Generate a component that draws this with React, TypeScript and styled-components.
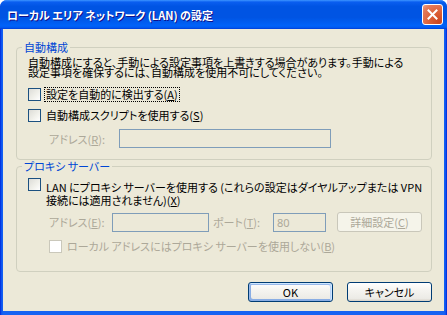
import React from 'react'
import styled, { createGlobalStyle } from 'styled-components'

const GlobalStyle = createGlobalStyle`
  html, body {
    margin: 0;
    padding: 0;
    background: #ffffff;
  }
  body {
    font-family: "Noto Sans CJK JP", "Noto Sans", sans-serif;
    font-size: 11px;
    color: #000;
  }
`

const S = {
  Window: styled.div`
    width: 447px;
    height: 315px;
    box-sizing: border-box;
    display: flex;
    flex-direction: column;
    border-radius: 7px 7px 0 0;
    overflow: hidden;
    background: linear-gradient(90deg, #0019cf 0, #0a4ff0 1px, #1663f2 3px, #1663f2 calc(100% - 3px), #0a4ff0 calc(100% - 1px), #0019cf 100%);
  `,
  TitleBar: styled.div`
    height: 29px;
    flex: none;
    display: flex;
    align-items: center;
    justify-content: space-between;
    padding: 0 4px 0 7px;
    background: linear-gradient(180deg, #3d95ff 0%, #0a5ef0 7%, #0054e3 22%, #0054e3 60%, #0062f8 88%, #005cf3 94%, #003dd7 100%);
  `,
  Title: styled.span`
    color: #fff;
    font-weight: 700;
    font-size: 11px;
    white-space: nowrap;
    text-shadow: 1px 1px #0f1089;
    font-feature-settings: "palt";
  `,
  Close: styled.div`
    width: 21px;
    height: 21px;
    box-sizing: border-box;
    border: 1px solid #fff;
    border-radius: 3px;
    background: radial-gradient(circle at 85% 90%, #cc4620 0, #db5e35 40%, #e47b5b 80%, #f0a287 100%);
    display: flex;
    align-items: center;
    justify-content: center;
  `,
  Body: styled.div`
    flex: 1;
    min-height: 0;
    margin: 0 3px 4px;
    background: #ece9d8;
    padding: 12px 12px 9px 13px;
    display: flex;
    flex-direction: column;
  `,
  Group: styled.fieldset<{ $gap?: number }>`
    margin: 0 0 ${p => p.$gap ?? 0}px;
    padding: 0;
    border: 1px solid #d0d0bf;
    border-radius: 4px;
    min-inline-size: 0;
  `,
  Legend: styled.legend`
    margin-left: 5px;
    padding: 0 2px;
    color: #0046d5;
    line-height: 13px;
    white-space: nowrap;
    font-feature-settings: "palt";
  `,
  GroupBody: styled.div<{ $pt: number; $pb: number }>`
    padding: ${p => p.$pt}px 11px ${p => p.$pb}px;
    display: flex;
    flex-direction: column;
  `,
  Desc: styled.p`
    margin: 0 0 11px;
    line-height: 10px;
    white-space: nowrap;
    font-feature-settings: "palt";
  `,
  CheckRow: styled.div<{ $indent?: number; $mb?: number }>`
    display: flex;
    align-items: flex-start;
    gap: 3px;
    margin: 0 0 ${p => p.$mb ?? 0}px ${p => p.$indent ?? 0}px;
  `,
  Box: styled.span<{ $disabled?: boolean }>`
    flex: none;
    width: 13px;
    height: 13px;
    box-sizing: border-box;
    border: 1px solid ${p => (p.$disabled ? '#cac8bb' : '#1c5180')};
    background: ${p => (p.$disabled ? '#ffffff' : 'linear-gradient(135deg, #dcdcd7 0%, #f0f0ea 55%, #ffffff 100%)')};
  `,
  Label: styled.span<{ $disabled?: boolean; $focus?: boolean; $pt?: number }>`
    line-height: ${p => (p.$pt ? '12.5px' : '13px')};
    padding: ${p => p.$pt ?? 0}px 1px 0;
    white-space: nowrap;
    color: ${p => (p.$disabled ? '#aca899' : '#000')};
    border: 1px dotted ${p => (p.$focus ? '#000' : 'transparent')};
    margin-top: -1px;
    font-feature-settings: "palt";
  `,
  FieldRow: styled.div<{ $mb?: number }>`
    display: flex;
    align-items: center;
    margin: 0 0 ${p => p.$mb ?? 0}px 21px;
  `,
  FieldLabel: styled.span<{ $w: number; $ml?: number }>`
    width: ${p => p.$w}px;
    margin-left: ${p => p.$ml ?? 0}px;
    flex: none;
    white-space: nowrap;
    color: #aca899;
    font-feature-settings: "palt";
  `,
  Input: styled.input<{ $w: number }>`
    appearance: none;
    width: ${p => p.$w}px;
    height: 19px;
    box-sizing: border-box;
    margin: 0;
    padding: 0 3px;
    border: 1px solid #7f9db9;
    background: #ece9d8;
    font-family: "Noto Sans", sans-serif;
    font-size: 11px;
    flex: none;
    &:disabled {
      color: #aca899;
      -webkit-text-fill-color: #aca899;
    }
  `,
  Button: styled.button<{ $default?: boolean; $ml?: number }>`
    width: 85px;
    height: 20px;
    box-sizing: border-box;
    margin: 0 0 0 ${p => p.$ml ?? 0}px;
    padding: 0;
    flex: none;
    font: inherit;
    white-space: nowrap;
    font-feature-settings: "palt";
    color: #000;
    border: 1px solid #003c74;
    border-radius: 3px;
    background: linear-gradient(180deg, #ffffff 0%, #f5f4f0 40%, #ecebe6 86%, #d6d0c5 100%);
    box-shadow: ${p =>
      p.$default
        ? 'inset -1px 1px #cee7ff, inset 1px 2px #98b8ea, inset -2px 2px #bcd4f6, inset 1px -1px #89ade4, inset 2px -2px #89ade4'
        : 'none'};
    &:disabled {
      color: #aca899;
      border-color: #c9c7ba;
      background: #f5f4ea;
    }
  `,
  Footer: styled.div`
    margin-top: auto;
    display: flex;
    justify-content: flex-end;
    gap: 14px;
  `
}

function Check({
  children,
  disabled,
  focus,
  pt,
  indent,
  mb
}: {
  children: React.ReactNode
  disabled?: boolean
  focus?: boolean
  pt?: number
  indent?: number
  mb?: number
}) {
  return (
    <S.CheckRow $indent={indent} $mb={mb}>
      <S.Box $disabled={disabled} />
      <S.Label $disabled={disabled} $focus={focus} $pt={pt}>
        {children}
      </S.Label>
    </S.CheckRow>
  )
}

export default function App() {
  return (
    <>
      <GlobalStyle />
      <S.Window>
        <S.TitleBar>
          <S.Title>ローカル エリア ネットワーク (LAN) の設定</S.Title>
          <S.Close>
            <svg width="11" height="11" viewBox="0 0 11 11">
              <path d="M1.5 1.5 L9.5 9.5 M9.5 1.5 L1.5 9.5" stroke="#fff" strokeWidth="2" strokeLinecap="square" />
            </svg>
          </S.Close>
        </S.TitleBar>
        <S.Body>
          <S.Group>
            <S.Legend>自動構成</S.Legend>
            <S.GroupBody $pt={3} $pb={11}>
              <S.Desc>
                自動構成にすると、手動による設定事項を上書きする場合があります。手動による
                <br />
                設定事項を確保するには、自動構成を使用不可にしてください。
              </S.Desc>
              <Check focus mb={7}>
                設定を自動的に検出する(<u>A</u>)
              </Check>
              <Check mb={6}>
                自動構成スクリプトを使用する(<u>S</u>)
              </Check>
              <S.FieldRow>
                <S.FieldLabel $w={70}>
                  アドレス(<u>R</u>):
                </S.FieldLabel>
                <S.Input $w={212} disabled defaultValue="" />
              </S.FieldRow>
            </S.GroupBody>
          </S.Group>
          <S.Group>
            <S.Legend>プロキシ サーバー</S.Legend>
            <S.GroupBody $pt={5} $pb={17}>
              <Check pt={3} mb={5}>
                LAN にプロキシ サーバーを使用する (これらの設定はダイヤルアップまたは VPN
                <br />
                接続には適用されません)(<u>X</u>)
              </Check>
              <S.FieldRow $mb={8}>
                <S.FieldLabel $w={63}>
                  アドレス(<u>E</u>):
                </S.FieldLabel>
                <S.Input $w={97} disabled defaultValue="" />
                <S.FieldLabel $w={60} $ml={4}>
                  ポート(<u>T</u>):
                </S.FieldLabel>
                <S.Input $w={53} disabled defaultValue="80" />
                <S.Button disabled $ml={11}>
                  詳細設定(<u>C</u>)
                </S.Button>
              </S.FieldRow>
              <Check disabled indent={21}>
                ローカル アドレスにはプロキシ サーバーを使用しない(<u>B</u>)
              </Check>
            </S.GroupBody>
          </S.Group>
          <S.Footer>
            <S.Button $default>OK</S.Button>
            <S.Button>キャンセル</S.Button>
          </S.Footer>
        </S.Body>
      </S.Window>
    </>
  )
}
